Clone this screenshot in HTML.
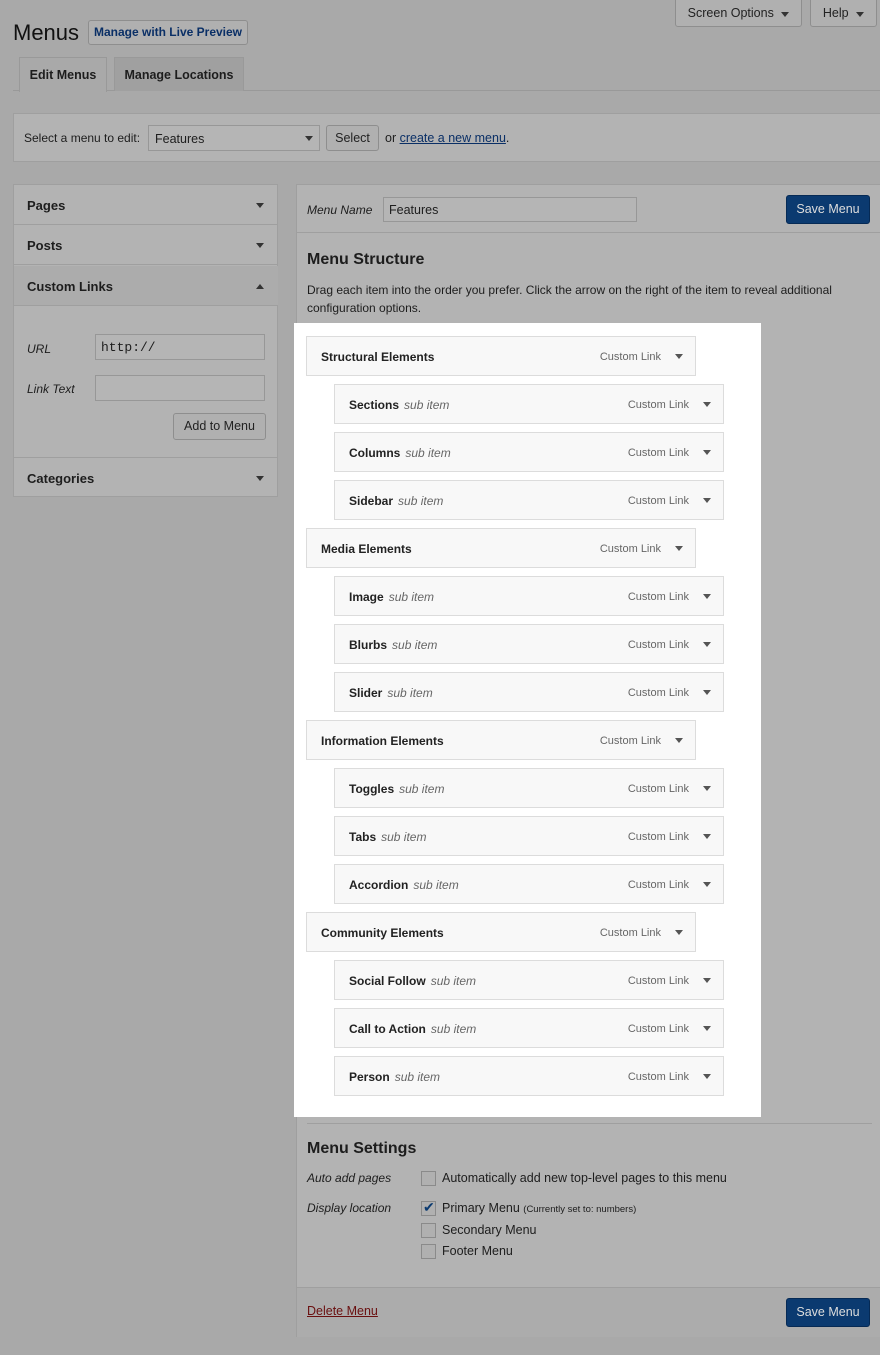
<!DOCTYPE html>
<html><head><meta charset="utf-8"><style>
*{box-sizing:border-box;margin:0;padding:0}
body{width:880px;height:1355px;background:#a9a9a9;font-family:"Liberation Sans",sans-serif;font-size:12.5px;color:#1d1d1d;position:relative;overflow:hidden}
.a{position:absolute}
.btn{position:absolute;border:1px solid #8e8e8e;background:#b0b0b0;border-radius:3px;text-align:center;font-size:12.5px;color:#222}
.panel{position:absolute;background:#b3b3b3;border:1px solid #9f9f9f}
.tri{display:inline-block;width:0;height:0;border-left:4px solid transparent;border-right:4px solid transparent;border-top:5px solid #333}
.hd{position:absolute;left:0;width:264px;height:40px;border-bottom:1px solid #9f9f9f;font-weight:bold;font-size:13px;padding:13px 0 0 13px}
.hd .tri{position:absolute;right:14px;top:18px}
.inp{position:absolute;background:#b5b5b5;border:1px solid #979797}
.it{position:absolute;height:40px;background:#f8f8f8;border:1px solid #dcdcdc;font-size:12px;font-weight:bold;color:#222;padding:13px 0 0 14px}
.it i{font-weight:normal;color:#666;margin-left:5px}
.it .cl{position:absolute;right:34px;top:14px;font-weight:normal;color:#666;font-size:11px}
.it .tri{position:absolute;right:12px;top:17px;border-top-color:#555}
.cb{position:absolute;width:15px;height:15px;border:1px solid #8a8a8a;background:#b0b0b0}
</style></head><body>
<div class="a" style="left:13px;top:20px;font-size:22px;color:#111">Menus</div>
<div class="btn" style="left:88px;top:20px;width:160px;height:25px;line-height:23px;color:#0a2f66;font-weight:bold;font-size:12px">Manage with Live Preview</div>
<div class="btn" style="left:675px;top:-3px;width:127px;height:30px;padding-top:8px;border-radius:0 0 3px 3px">Screen Options <span class="tri" style="margin-left:4px"></span></div>
<div class="btn" style="left:810px;top:-3px;width:67px;height:30px;padding-top:8px;border-radius:0 0 3px 3px">Help <span class="tri" style="margin-left:4px"></span></div>
<div class="a" style="left:13px;top:90px;width:867px;height:1px;background:#999"></div>
<div class="a" style="left:19px;top:57px;width:88px;height:35px;background:#a9a9a9;border:1px solid #999;border-bottom:none;font-weight:bold;padding-top:10px;text-align:center">Edit Menus</div>
<div class="a" style="left:114px;top:57px;width:130px;height:34px;background:#a0a0a0;border:1px solid #999;border-bottom:none;font-weight:bold;padding-top:10px;text-align:center">Manage Locations</div>
<div class="panel" style="left:13px;top:113px;width:868px;height:49px"></div>
<div class="a" style="left:24px;top:131px;font-size:12px">Select a menu to edit:</div>
<div class="inp" style="left:148px;top:125px;width:172px;height:26px;padding:6px 0 0 6px">Features<span class="tri" style="position:absolute;right:6px;top:10px"></span></div>
<div class="btn" style="left:326px;top:125px;width:53px;height:26px;line-height:24px">Select</div>
<div class="a" style="left:385px;top:131px">or <span style="color:#0a2f66;text-decoration:underline">create a new menu</span>.</div>

<div class="panel" style="left:13px;top:184px;width:265px;height:313px">
<div class="hd" style="top:0">Pages<span class="tri"></span></div>
<div class="hd" style="top:40px">Posts<span class="tri"></span></div>
<div class="hd" style="top:81px;background:#acacac">Custom Links<span class="tri" style="border-top:none;border-bottom:5px solid #333"></span></div>
<div class="a" style="left:13px;top:157px;font-style:italic;font-size:12px">URL</div>
<div class="inp" style="left:81px;top:149px;width:170px;height:26px;padding:5px 0 0 5px;font-family:'Liberation Mono',monospace;font-size:13px">http://</div>
<div class="a" style="left:13px;top:197px;font-style:italic;font-size:12px">Link Text</div>
<div class="inp" style="left:81px;top:190px;width:170px;height:26px"></div>
<div class="btn" style="left:159px;top:228px;width:93px;height:27px;line-height:25px">Add to Menu</div>
<div class="hd" style="top:272px;border-top:1px solid #9f9f9f;border-bottom:none">Categories<span class="tri"></span></div>
</div>

<div class="panel" style="left:296px;top:184px;width:585px;height:1153px">
<div class="a" style="left:0;top:47px;width:585px;height:1px;background:#9f9f9f"></div>
<div class="a" style="left:10px;top:18px;font-style:italic;font-size:12px">Menu Name</div>
<div class="inp" style="left:86px;top:12px;width:254px;height:25px;padding:5px 0 0 5px">Features</div>
<div class="btn" style="left:489px;top:10px;width:84px;height:29px;line-height:27px;background:#0b3a70;border-color:#062a55;color:#ddd">Save Menu</div>
<div class="a" style="left:10px;top:66px;font-size:16px;font-weight:bold">Menu Structure</div>
<div class="a" style="left:10px;top:96px;width:560px;font-size:12px;line-height:18px">Drag each item into the order you prefer. Click the arrow on the right of the item to reveal additional configuration options.</div>
<div class="a" style="left:10px;top:938px;width:565px;height:1px;background:#9f9f9f"></div>
<div class="a" style="left:10px;top:955px;font-size:16px;font-weight:bold">Menu Settings</div>
<div class="a" style="left:10px;top:986px;font-style:italic;font-size:12px">Auto add pages</div>
<div class="a" style="left:10px;top:1016px;font-style:italic;font-size:12px">Display location</div>
<div class="cb" style="left:124px;top:986px"></div><div class="a" style="left:145px;top:986px">Automatically add new top-level pages to this menu</div>
<div class="cb" style="left:124px;top:1016px"><span style="position:absolute;left:1px;top:-3px;color:#0b3a70;font-size:14px">✔</span></div><div class="a" style="left:145px;top:1016px">Primary Menu <span style="font-size:9.5px">(Currently set to: numbers)</span></div>
<div class="cb" style="left:124px;top:1038px"></div><div class="a" style="left:145px;top:1038px">Secondary Menu</div>
<div class="cb" style="left:124px;top:1059px"></div><div class="a" style="left:145px;top:1059px">Footer Menu</div>
<div class="a" style="left:0;top:1102px;width:585px;height:50px;background:#acacac;border-top:1px solid #9f9f9f"></div>
<div class="a" style="left:10px;top:1119px;color:#6a1010;text-decoration:underline">Delete Menu</div>
<div class="btn" style="left:489px;top:1113px;width:84px;height:29px;line-height:27px;background:#0b3a70;border-color:#062a55;color:#ddd">Save Menu</div>
</div>

<div class="a" style="left:294px;top:323px;width:467px;height:794px;background:#fff"></div>
<div class="it" style="left:306px;top:336px;width:390px">Structural Elements<span class="cl">Custom Link</span><span class="tri"></span></div>
<div class="it" style="left:334px;top:384px;width:390px">Sections<i>sub item</i><span class="cl">Custom Link</span><span class="tri"></span></div>
<div class="it" style="left:334px;top:432px;width:390px">Columns<i>sub item</i><span class="cl">Custom Link</span><span class="tri"></span></div>
<div class="it" style="left:334px;top:480px;width:390px">Sidebar<i>sub item</i><span class="cl">Custom Link</span><span class="tri"></span></div>
<div class="it" style="left:306px;top:528px;width:390px">Media Elements<span class="cl">Custom Link</span><span class="tri"></span></div>
<div class="it" style="left:334px;top:576px;width:390px">Image<i>sub item</i><span class="cl">Custom Link</span><span class="tri"></span></div>
<div class="it" style="left:334px;top:624px;width:390px">Blurbs<i>sub item</i><span class="cl">Custom Link</span><span class="tri"></span></div>
<div class="it" style="left:334px;top:672px;width:390px">Slider<i>sub item</i><span class="cl">Custom Link</span><span class="tri"></span></div>
<div class="it" style="left:306px;top:720px;width:390px">Information Elements<span class="cl">Custom Link</span><span class="tri"></span></div>
<div class="it" style="left:334px;top:768px;width:390px">Toggles<i>sub item</i><span class="cl">Custom Link</span><span class="tri"></span></div>
<div class="it" style="left:334px;top:816px;width:390px">Tabs<i>sub item</i><span class="cl">Custom Link</span><span class="tri"></span></div>
<div class="it" style="left:334px;top:864px;width:390px">Accordion<i>sub item</i><span class="cl">Custom Link</span><span class="tri"></span></div>
<div class="it" style="left:306px;top:912px;width:390px">Community Elements<span class="cl">Custom Link</span><span class="tri"></span></div>
<div class="it" style="left:334px;top:960px;width:390px">Social Follow<i>sub item</i><span class="cl">Custom Link</span><span class="tri"></span></div>
<div class="it" style="left:334px;top:1008px;width:390px">Call to Action<i>sub item</i><span class="cl">Custom Link</span><span class="tri"></span></div>
<div class="it" style="left:334px;top:1056px;width:390px">Person<i>sub item</i><span class="cl">Custom Link</span><span class="tri"></span></div>
</body></html>
